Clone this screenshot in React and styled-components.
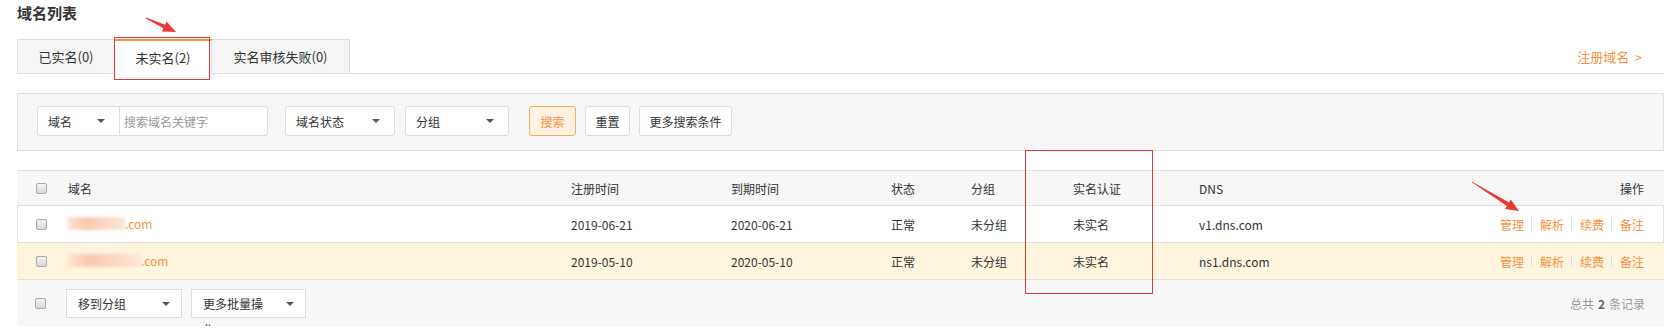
import React from 'react';
import styled, { createGlobalStyle } from 'styled-components';

const ORANGE = '#f8913f';
const LINE = '#e0e0e0';

const GlobalStyle = createGlobalStyle`
  body {
    margin: 0;
    background: #fff;
  }
`;

const Page = styled.div`
  position: relative;
  padding: 0 7px 0 17px;
  font-family: "Noto Sans CJK SC", "Noto Sans", sans-serif;
  font-size: 12px;
  color: #333;
`;

const Title = styled.h2`
  margin: 0;
  height: 39px;
  font-size: 15px;
  line-height: 25px;
  font-weight: bold;
  color: #333;
`;

const TabBar = styled.div`
  display: flex;
  align-items: flex-end;
  height: 34px;
  border-bottom: 1px solid #ddd;
`;

const Tab = styled.div`
  box-sizing: border-box;
  width: ${p => p.$w}px;
  height: ${p => (p.$active ? 35 : 34)}px;
  margin-bottom: ${p => (p.$active ? -1 : 0)}px;
  display: flex;
  align-items: center;
  justify-content: center;
  font-size: 13px;
  color: #333;
  background: ${p => (p.$active ? '#fff' : '#f5f5f5')};
  border: 1px solid #ddd;
  border-left: ${p => (p.$first ? '1px solid #ddd' : 'none')};
  border-top: ${p => (p.$active ? `2px solid ${ORANGE}` : '1px solid #ddd')};
  border-bottom: ${p => (p.$active ? 'none' : '0')};
  padding-bottom: ${p => (p.$active ? 1 : 0)}px;
`;

const RegisterLink = styled.a`
  margin-left: auto;
  align-self: center;
  margin-right: 22px;
  font-size: 13px;
  color: ${ORANGE};
  text-decoration: none;
  span {
    margin-left: 6px;
    font-size: 12px;
  }
`;

const FilterPanel = styled.div`
  margin-top: 19px;
  padding: 12px 19px 14px;
  background: #f7f7f7;
  border: 1px solid ${LINE};
  display: flex;
  align-items: center;
`;

const Caret = styled.i`
  width: 0;
  height: 0;
  border-left: 4px solid transparent;
  border-right: 4px solid transparent;
  border-top: 4px solid #555;
`;

const Select = styled.div`
  box-sizing: border-box;
  width: ${p => p.$w}px;
  height: 30px;
  padding: 0 14px 0 10px;
  display: flex;
  align-items: center;
  justify-content: space-between;
  background: #fff;
  border: 1px solid #ddd;
  border-radius: ${p => (p.$joined ? '3px 0 0 3px' : '3px')};
  margin-right: ${p => p.$mr || 0}px;
`;

const SearchInput = styled.input`
  box-sizing: border-box;
  width: 148px;
  height: 30px;
  margin-right: 17px;
  padding: 0 4px;
  border: 1px solid #ddd;
  border-left: none;
  border-radius: 0 3px 3px 0;
  outline: none;
  font: inherit;
  color: #333;
  &::placeholder {
    color: #999;
  }
`;

const Button = styled.button`
  box-sizing: border-box;
  height: 30px;
  width: ${p => p.$w}px;
  margin-right: 9px;
  padding: 0;
  font: inherit;
  color: ${p => (p.$primary ? ORANGE : '#333')};
  background: ${p => (p.$primary ? '#fef2e2' : '#fff')};
  border: 1px solid ${p => (p.$primary ? '#f9ab6a' : '#ddd')};
  border-radius: 3px;
`;

const Table = styled.div`
  margin-top: 19px;
`;

const COLS = '50px 503px 160px 160px 80px 102px 126px 1fr 280px';

const Row = styled.div`
  box-sizing: border-box;
  display: grid;
  grid-template-columns: ${COLS};
  align-items: center;
  height: ${p => (p.$head ? 36 : 37)}px;
  background: ${p => p.$bg || '#fff'};
  border-top: ${p => (p.$head ? `1px solid ${LINE}` : 'none')};
  border-bottom: 1px solid ${LINE};
  border-left: 1px solid ${p => (p.$hover ? LINE : 'transparent')};
  border-right: 1px solid ${p => (p.$hover ? LINE : 'transparent')};
`;

const Cell = styled.div`
  padding-left: ${p => p.$pl || 0}px;
  padding-right: ${p => p.$pr || 0}px;
  text-align: ${p => p.$align || 'left'};
  white-space: nowrap;
`;

const Check = styled.span`
  display: inline-block;
  box-sizing: border-box;
  width: 11px;
  height: 11px;
  vertical-align: middle;
  border: 1px solid #a9a9a9;
  border-radius: 2px;
  background: linear-gradient(#f3f3f3, #d8d8d8);
`;

const CheckCell = styled(Cell)`
  padding-left: 18px;
  line-height: 0;
`;

const Domain = styled.span`
  color: ${ORANGE};
  display: inline-flex;
  align-items: center;
`;

const Blur = styled.span`
  display: inline-block;
  width: ${p => p.$w}px;
  height: 13px;
  background: linear-gradient(90deg, #fde3d4, #fbc9ad 30%, #fcd6c0 60%, #fde6d8);
  filter: blur(1.5px);
`;

const Ops = styled.div`
  display: flex;
  justify-content: flex-end;
  align-items: center;
  padding-right: 19px;
  a {
    color: ${ORANGE};
    text-decoration: none;
  }
`;

const Sep = styled.i`
  width: 1px;
  height: 12px;
  margin: 0 7.5px;
  background: #ddd;
`;

const Footer = styled.div`
  box-sizing: border-box;
  height: 46px;
  display: flex;
  align-items: center;
  padding: 0 19px 0 18px;
  background: #f7f7f7;
`;

const BatchSelect = styled.div`
  box-sizing: border-box;
  width: ${p => p.$w}px;
  height: 29px;
  margin-left: ${p => p.$ml}px;
  padding: 1px 11px 0;
  display: flex;
  align-items: flex-start;
  background: #fff;
  border: 1px solid #ddd;
  span {
    flex: 0 0 66px;
    line-height: 26px;
    white-space: normal;
  }
  ${Caret} {
    margin-left: auto;
    align-self: center;
  }
`;

const Total = styled.div`
  margin-left: auto;
  color: #999;
  b {
    color: #666;
    margin: 0 4px;
  }
`;

const Mark = styled.div`
  position: absolute;
  left: ${p => p.$x}px;
  top: ${p => p.$y}px;
  width: ${p => p.$w}px;
  height: ${p => p.$h}px;
  border: 1px solid #e83a36;
  pointer-events: none;
`;

const Overlay = styled.svg`
  position: absolute;
  left: 0;
  top: 0;
  pointer-events: none;
`;

const arrowPoints = (x1, y1, x2, y2) => {
  const dx = x2 - x1;
  const dy = y2 - y1;
  const len = Math.hypot(dx, dy);
  const ux = dx / len;
  const uy = dy / len;
  const nx = -uy;
  const ny = ux;
  const hl = 13;
  const bx = x2 - ux * hl;
  const by = y2 - uy * hl;
  const pts = [
    [x1 + nx * 0.4, y1 + ny * 0.4],
    [bx + nx * 2, by + ny * 2],
    [bx + nx * 5.5, by + ny * 5.5],
    [x2, y2],
    [bx - nx * 5.5, by - ny * 5.5],
    [bx - nx * 2, by - ny * 2],
    [x1 - nx * 0.4, y1 - ny * 0.4],
  ];
  return pts.map(p => p.map(v => v.toFixed(1)).join(',')).join(' ');
};

const rows = [
  { blur: 57, reg: '2019-06-21', exp: '2020-06-21', dns: 'v1.dns.com', hover: true },
  { blur: 73, reg: '2019-05-10', exp: '2020-05-10', dns: 'ns1.dns.com', bg: '#fef5df' },
];

const App = () => {
  return (
    <>
      <GlobalStyle />
      <Page>
        <Title>域名列表</Title>
        <TabBar>
          <Tab $w={98} $first>已实名(0)</Tab>
          <Tab $w={97} $active>未实名(2)</Tab>
          <Tab $w={138}>实名审核失败(0)</Tab>
          <RegisterLink href="#">注册域名<span>&gt;</span></RegisterLink>
        </TabBar>

        <FilterPanel>
          <Select $w={83} $joined>域名<Caret /></Select>
          <SearchInput type="text" placeholder="搜索域名关键字" />
          <Select $w={110} $mr={10}>域名状态<Caret /></Select>
          <Select $w={104} $mr={20}>分组<Caret /></Select>
          <Button $w={47} $primary>搜索</Button>
          <Button $w={45}>重置</Button>
          <Button $w={93}>更多搜索条件</Button>
        </FilterPanel>

        <Table>
          <Row $head $bg="#f7f7f7">
            <CheckCell><Check /></CheckCell>
            <Cell>域名</Cell>
            <Cell>注册时间</Cell>
            <Cell>到期时间</Cell>
            <Cell>状态</Cell>
            <Cell>分组</Cell>
            <Cell>实名认证</Cell>
            <Cell>DNS</Cell>
            <Cell $align="right" $pr={19}>操作</Cell>
          </Row>
          {rows.map(r => (
            <Row key={r.reg} $bg={r.bg} $hover={r.hover}>
              <CheckCell><Check /></CheckCell>
              <Cell>
                <Domain><Blur $w={r.blur} />.com</Domain>
              </Cell>
              <Cell>{r.reg}</Cell>
              <Cell>{r.exp}</Cell>
              <Cell>正常</Cell>
              <Cell>未分组</Cell>
              <Cell>未实名</Cell>
              <Cell>{r.dns}</Cell>
              <Ops>
                <a href="#">管理</a><Sep />
                <a href="#">解析</a><Sep />
                <a href="#">续费</a><Sep />
                <a href="#">备注</a>
              </Ops>
            </Row>
          ))}
          <Footer>
            <Check />
            <BatchSelect $w={116} $ml={20}><span>移到分组</span><Caret /></BatchSelect>
            <BatchSelect $w={115} $ml={9}><span>更多批量操作</span><Caret /></BatchSelect>
            <Total>总共<b>2</b>条记录</Total>
          </Footer>
        </Table>

        <Mark $x={114} $y={37} $w={94} $h={41} />
        <Mark $x={1025} $y={150} $w={126} $h={142} />
        <Overlay width="1671" height="330">
          <polygon points={arrowPoints(146, 18, 176, 32)} fill="#ea3a35" />
          <polygon points={arrowPoints(1472, 182, 1519, 211)} fill="#ea3a35" />
        </Overlay>
      </Page>
    </>
  );
};

export default App;
